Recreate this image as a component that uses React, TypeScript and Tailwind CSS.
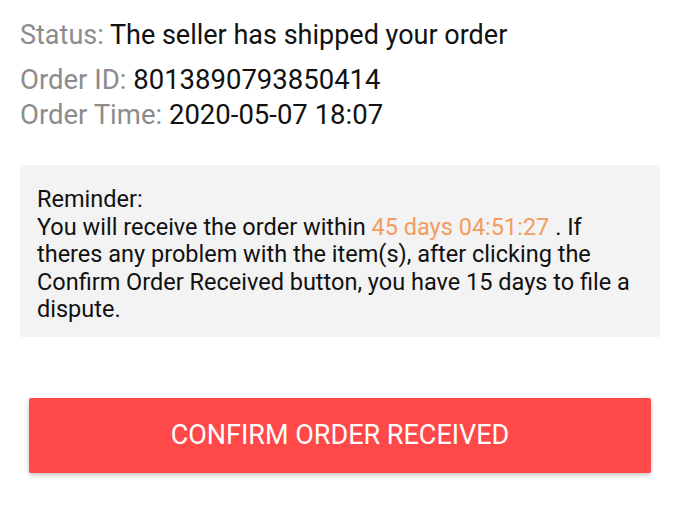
export default function App() {
  return (
    <div className="w-[680px] h-[517px] bg-white font-['Roboto',sans-serif] overflow-hidden">
      <div className="pt-[17px] px-[20px]">
        <p className="text-[27px] leading-[36px] text-[#111]">
          <span className="text-[#8c8c8c]">Status:</span> The seller has shipped your order
        </p>
        <div className="mt-[9px]">
          <p className="text-[27.5px] leading-[35px] text-[#111]">
            <span className="text-[#8c8c8c]">Order ID:</span> 8013890793850414
          </p>
          <p className="text-[27.5px] leading-[35px] text-[#111]">
            <span className="text-[#8c8c8c]">Order Time:</span> 2020-05-07 18:07
          </p>
        </div>
      </div>

      <div className="mx-[20px] mt-[33px] h-[172px] bg-[#f3f3f3] pl-[17px] pr-[24px] pt-[21px]">
        <p className="text-[23.5px] leading-[27.5px] text-[#111]">
          Reminder:
          <br />
          You will receive the order within{" "}
          <span className="text-[#f29c5f]">45 days 04:51:27</span> . If theres any problem
          with the item(s), after clicking the Confirm Order Received button, you have 15
          days to file a dispute.
        </p>
      </div>

      <div className="px-[29px] mt-[61px]">
        <button
          type="button"
          className="w-full h-[75px] bg-[#ff4848] text-white text-[27px] shadow-[0_2px_4px_rgba(0,0,0,0.25)] rounded-[2px]"
        >
          CONFIRM ORDER RECEIVED
        </button>
      </div>
    </div>
  );
}
